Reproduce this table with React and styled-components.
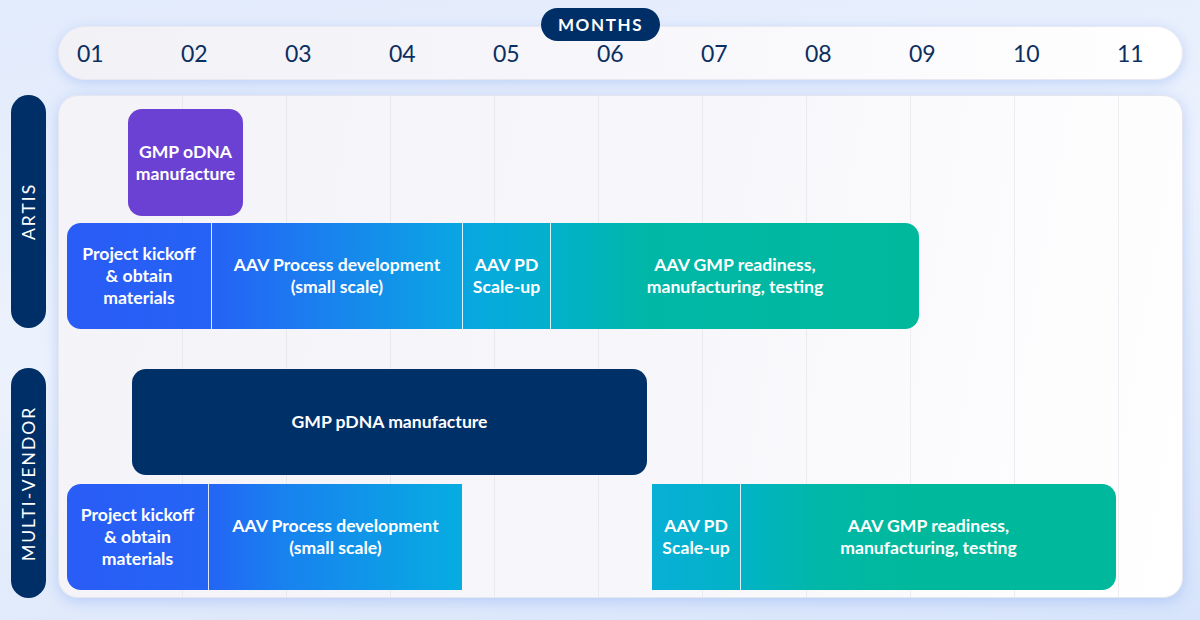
import React from "react";
import styled, { createGlobalStyle } from "styled-components";

const Global = createGlobalStyle`
  html, body { margin: 0; padding: 0; }
  body {
    width: 1200px;
    height: 620px;
    overflow: hidden;
    font-family: Lato, "Open Sans", sans-serif;
    background: linear-gradient(170deg, #e2ebfc 0%, #ecf2fd 45%, #dfe9fb 80%, #d7e4fb 100%);
  }
`;

const NAVY = "#002f67";

const Page = styled.div`
  display: grid;
  grid-template-columns: 35px minmax(0, 1fr);
  grid-template-rows: 54px 503px;
  column-gap: 12px;
  row-gap: 15px;
  padding: 26px 17px 0 11px;
  box-sizing: border-box;
  width: 1200px;
  height: 620px;
`;

const Header = styled.div`
  grid-column: 2;
  min-width: 0;
  position: relative;
  display: flex;
  align-items: center;
  padding-left: 18px;
  border-radius: 27px;
  background: linear-gradient(90deg, #f2f1f6 0%, #f7f6fa 50%, #ffffff 100%);
  border: 1px solid #e8e8f0;
  box-shadow: 0 3px 12px rgba(140, 175, 245, 0.45);
  box-sizing: border-box;
`;

const Badge = styled.div`
  position: absolute;
  left: 482px;
  top: -19px;
  width: 119px;
  height: 33px;
  border-radius: 17px;
  background: ${NAVY};
  color: #fff;
  display: flex;
  align-items: center;
  justify-content: center;
  font-size: 17px;
  font-weight: 700;
  letter-spacing: 1.6px;
`;

const Month = styled.div`
  width: 104px;
  flex: none;
  font-size: 23px;
  color: #0b2f5f;
  font-weight: 400;
  line-height: 1;
  &:last-child { width: auto; }
`;

const SideCol = styled.div`
  display: flex;
  flex-direction: column;
  gap: 40px;
`;

const SideLabel = styled.div`
  height: ${(p) => p.$h}px;
  border-radius: 18px;
  background: ${NAVY};
  color: #fff;
  display: flex;
  align-items: center;
  justify-content: center;
  writing-mode: vertical-rl;
  transform: rotate(180deg);
  font-size: 17.5px;
  font-weight: 400;
  letter-spacing: 2px;
`;

const Panel = styled.div`
  min-width: 0;
  display: flex;
  flex-direction: column;
  padding: 13px 8px 9px;
  box-sizing: border-box;
  border-radius: 20px;
  border: 1px solid #e6e6ee;
  background:
    repeating-linear-gradient(90deg, transparent 0, transparent 103px, rgba(220, 220, 230, 0.5) 103px, rgba(220, 220, 230, 0.5) 104px) 20px 0 / 100% 100% no-repeat,
    linear-gradient(100deg, #f4f3f7 0%, #f7f6fa 55%, #ffffff 100%);
  box-shadow: 0 3px 14px rgba(140, 175, 245, 0.5);
`;

const Lane = styled.div`
  display: flex;
  height: ${(p) => p.$h}px;
  margin-top: ${(p) => p.$mt || 0}px;
  flex: none;
`;

const Bar = styled.div`
  display: flex;
  flex: none;
  height: 100%;
  background: ${(p) => p.$bg};
  border-radius: ${(p) =>
    p.$round === "left" ? "14px 0 0 14px" : p.$round === "right" ? "0 14px 14px 0" : "14px"};
  overflow: hidden;
`;

const Seg = styled.div`
  flex: none;
  box-sizing: border-box;
  display: flex;
  align-items: center;
  justify-content: center;
  text-align: center;
  white-space: pre-line;
  color: #fff;
  font-weight: 700;
  font-size: 17.6px;
  line-height: 22px;
  border-left: ${(p) => (p.$sep ? "1px solid rgba(255,255,255,0.85)" : "none")};
`;

const lanes = [
  {
    h: 107,
    bars: [
      {
        x: 127,
        bg: "#6b41d3",
        round: "both",
        segs: [{ w: 115, t: "GMP oDNA\nmanufacture" }],
      },
    ],
  },
  {
    h: 106,
    mt: 7,
    bars: [
      {
        x: 66,
        round: "both",
        bg: "linear-gradient(90deg, #2a5cf6 0%, #2562f5 17%, #1a80ef 30%, #09a6e3 46%, #02b1cc 57%, #00b7a7 68%, #00b99c 100%)",
        segs: [
          { w: 144, t: "Project kickoff\n& obtain\nmaterials" },
          { w: 251, t: "AAV Process development\n(small scale)" },
          { w: 88, t: "AAV PD\nScale-up" },
          { w: 369, t: "AAV GMP readiness,\nmanufacturing, testing" },
        ],
      },
    ],
  },
  {
    h: 106,
    mt: 40,
    bars: [
      {
        x: 131,
        bg: "#003068",
        round: "both",
        segs: [{ w: 515, t: "GMP pDNA manufacture" }],
      },
    ],
  },
  {
    h: 106,
    mt: 9,
    bars: [
      {
        x: 66,
        round: "left",
        bg: "linear-gradient(90deg, #2a5cf6 0%, #2465f5 36%, #1882ef 55%, #06ade1 100%)",
        segs: [
          { w: 141, t: "Project kickoff\n& obtain\nmaterials" },
          { w: 254, t: "AAV Process development\n(small scale)" },
        ],
      },
      {
        x: 651,
        round: "right",
        bg: "linear-gradient(90deg, #08afd6 0%, #01b3c6 19%, #00b7a9 35%, #00b99c 55%, #00b99c 100%)",
        segs: [
          { w: 88, t: "AAV PD\nScale-up" },
          { w: 376, t: "AAV GMP readiness,\nmanufacturing, testing" },
        ],
      },
    ],
  },
];

const months = ["01", "02", "03", "04", "05", "06", "07", "08", "09", "10", "11"];

export default function App() {
  return (
    <>
      <Global />
      <Page>
        <div />
        <Header>
          <Badge>MONTHS</Badge>
          {months.map((m) => (
            <Month key={m}>{m}</Month>
          ))}
        </Header>
        <SideCol>
          <SideLabel $h={233}>ARTIS</SideLabel>
          <SideLabel $h={230}>MULTI-VENDOR</SideLabel>
        </SideCol>
        <Panel>
          {lanes.map((lane, li) => {
            let cursor = 66;
            return (
              <Lane key={li} $h={lane.h} $mt={lane.mt}>
                {lane.bars.map((bar, bi) => {
                  const offset = bar.x - cursor;
                  const width = bar.segs.reduce((s, g) => s + g.w, 0);
                  cursor = bar.x + width;
                  return (
                    <Bar
                      key={bi}
                      $bg={bar.bg}
                      $round={bar.round}
                      style={{ marginLeft: offset }}
                    >
                      {bar.segs.map((s, si) => (
                        <Seg key={si} $sep={si > 0} style={{ width: s.w }}>
                          {s.t}
                        </Seg>
                      ))}
                    </Bar>
                  );
                })}
              </Lane>
            );
          })}
        </Panel>
      </Page>
    </>
  );
}
